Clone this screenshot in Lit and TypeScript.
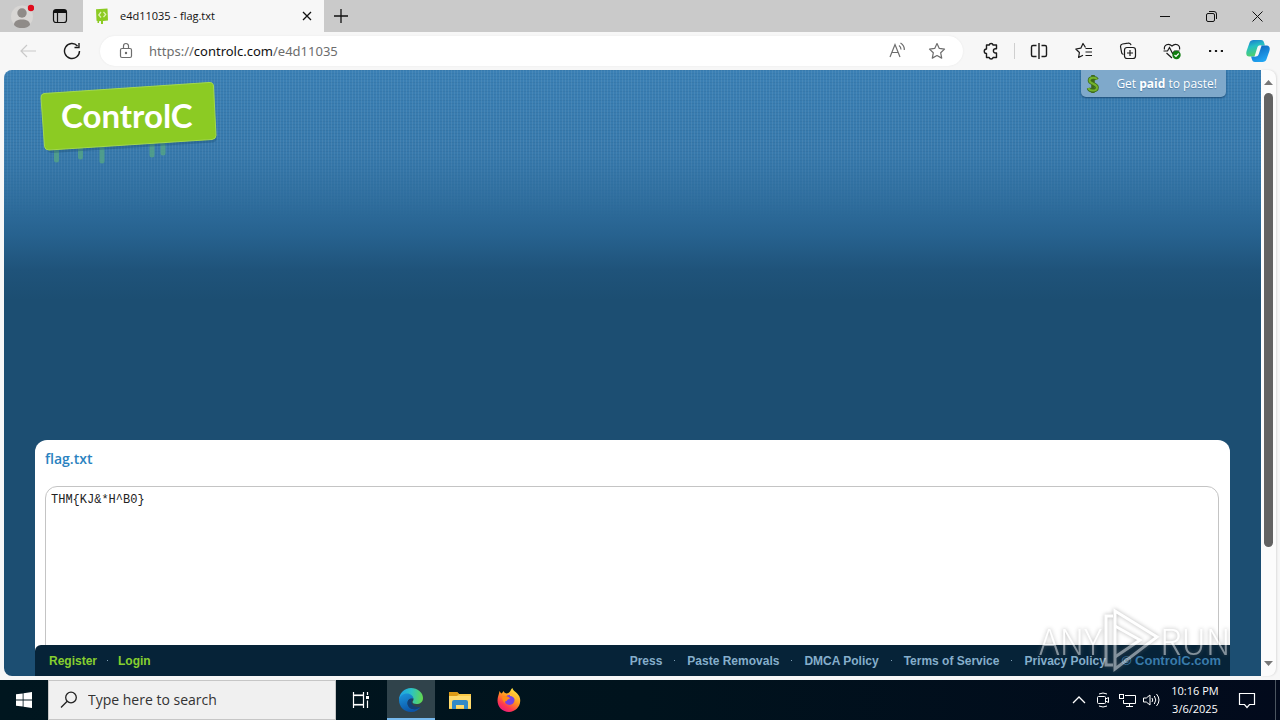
import { LitElement, html, css, svg } from "lit";
import { customElement, state } from "lit/decorators.js";

const FOOTER_LINKS = ["Press", "Paste Removals", "DMCA Policy", "Terms of Service", "Privacy Policy"];

@customElement("browser-tabs")
class BrowserTabs extends LitElement {
  static styles = css`
    :host { display: flex; height: 32px; background: #cacaca; font: 11px/16px "Open Sans", "Noto Sans", sans-serif; color: #111; }
    button { border: 0; background: none; padding: 0; margin: 0; display: grid; place-items: center; color: inherit; }
    svg { display: block; }
    .profile { width: 44px; }
    .panes { width: 32px; }
    .tab { margin-left: 7px; width: 241px; box-sizing: border-box; background: #f7f7f7; display: flex; align-items: center; padding: 0 9px 0 11px; gap: 8px; }
    .title { flex: 1; white-space: nowrap; padding-left: 2px; }
    .close { width: 16px; height: 16px; }
    .add { width: 33px; }
    .space { flex: 1; }
    .win { width: 46px; }
  `;
  render() {
    return html`
      <button class="profile" aria-label="Profile">
        <svg width="24" height="28" viewBox="0 0 24 28"><circle cx="12" cy="14.500" r="11" fill="#d8d6d4"/><circle cx="12" cy="11" r="4.700" fill="#8f8b88"/><path d="M4 23c0-4 3.500-5.500 8-5.500s8 1.500 8 5.500c-2 2.500-5 3-8 3s-6-.5-8-3z" fill="#8f8b88"/><circle cx="21" cy="6" r="3.200" fill="#e00b1c"/></svg>
      </button>
      <button class="panes" aria-label="Tab actions">
        <svg width="16" height="16" viewBox="0 0 16 16" fill="none" stroke="#111"><rect x="1.500" y="1.500" width="13" height="13" rx="2.500" stroke-width="1.200"/><path d="M2 3.500h12" stroke-width="3"/><path d="M5.500 5v9.500" stroke-width="1.200"/></svg>
      </button>
      <div class="tab">
        <svg width="16" height="18" viewBox="0 0 16 18"><path d="M2 2.300 13.500 1.500l.5 12-5 .5V17H7v-3l-2 .2V16H3.500v-2l-1-.2z" fill="#8ccb23"/><path d="M7 5 4.800 8 7 10.500M9.500 4.800 11.700 7.500 9.500 10.200" stroke="#dff0b4" fill="none" stroke-width="1.300"/></svg>
        <span class="title">e4d11035 - flag.txt</span>
        <button class="close" aria-label="Close tab"><svg width="10" height="10" viewBox="0 0 10 10"><path d="m1 1 8 8M9 1 1 9" stroke="#111" stroke-width="1.300"/></svg></button>
      </div>
      <button class="add" aria-label="New tab"><svg width="14" height="14" viewBox="0 0 14 14"><path d="M7 0v14M0 7h14" stroke="#111" stroke-width="1.300"/></svg></button>
      <span class="space"></span>
      <button class="win" aria-label="Minimize"><svg width="10" height="10" viewBox="0 0 10 10"><path d="M0 5.500h10" stroke="#111"/></svg></button>
      <button class="win" aria-label="Restore"><svg width="11" height="11" viewBox="0 0 11 11" fill="none" stroke="#111"><rect x=".5" y="2.500" width="8" height="8" rx="1.500"/><path d="M3 .5h5a2.500 2.500 0 0 1 2.500 2.500v5"/></svg></button>
      <button class="win" aria-label="Close"><svg width="11" height="11" viewBox="0 0 11 11"><path d="m.5.5 10 10M10.500.5l-10 10" stroke="#111"/></svg></button>
    `;
  }
}

@customElement("browser-toolbar")
class BrowserToolbar extends LitElement {
  static styles = css`
    :host { display: flex; height: 38px; background: #f7f7f7; align-items: center; padding-right: 2px; }
    button { border: 0; background: none; padding: 0; margin: 0; display: grid; place-items: center; }
    svg { display: block; fill: none; stroke: #1b1b1b; stroke-width: 1.2; }
    .back { width: 44px; margin-left: 6px; }
    .back svg { stroke: #c9c9c9; }
    .reload { width: 44px; }
    .address { flex: 1; height: 30px; margin: 0 4px 0 6px; border-radius: 15px; background: #fff; display: flex; align-items: center; padding: 0 12px 0 18px; box-shadow: 0 0 2px #e6e6e6; }
    .address svg { stroke: #6d6d6d; }
    .url { flex: 1; margin-left: 15px; font: 13px/20px "Noto Sans", "Open Sans", sans-serif; color: #6d6d6d; }
    .url b { font-weight: 400; color: #111; }
    .inner { width: 28px; margin-left: 12px; }
    .tool { width: 44px; }
    .tool.first { width: 47px; }
    .rule { width: 1px; height: 16px; background: #cfcfcf; }
    .copilot { width: 40px; }
    .copilot svg { stroke: none; }
  `;
  render() {
    return html`
      <button class="back" aria-label="Back"><svg width="18" height="14" viewBox="0 0 18 14"><path d="M17 7H2M8 1 2 7l6 6"/></svg></button>
      <button class="reload" aria-label="Refresh"><svg width="18" height="18" viewBox="0 0 18 18"><path d="M16.500 9A7.500 7.500 0 1 1 14.500 3.900M16 1v4.500h-4.500" stroke-width="1.400"/></svg></button>
      <div class="address">
        <svg width="16" height="18" viewBox="0 0 16 18"><rect x="2.500" y="6.500" width="11" height="9" rx="1.500"/><path d="M5.500 6V4a2.500 2.500 0 0 1 5 0v2"/><circle cx="8" cy="11" r=".6" fill="#6d6d6d"/></svg>
        <span class="url">https://<b>controlc.com</b>/e4d11035</span>
        <button class="inner" aria-label="Read aloud"><svg width="18" height="18" viewBox="0 0 18 18"><path d="m2 15 5-12.500L12 15M3.800 10.500h6.400M11 3.500c1.500 1 2 2.500 2 4M12.500 1c2.500 1.500 4 4 3.800 7"/></svg></button>
        <button class="inner" aria-label="Add to favorites"><svg width="18" height="18" viewBox="0 0 18 18"><path d="m9 1.500 2.300 4.900 5.200.7-3.800 3.700 1 5.300L9 13.500l-4.700 2.600 1-5.300L1.500 7.100l5.200-.7z" stroke-linejoin="round"/></svg></button>
      </div>
      <button class="tool first" aria-label="Extensions"><svg width="18" height="18" viewBox="0 0 18 18"><path d="M4.500 3h2.700a2 2 0 0 1 3.900 0h3.400v3.800h-1a2 2 0 0 0 0 4.200h1v4.500h-3.400a2 2 0 0 1-3.900 0H4.500v-4a2.200 2.200 0 1 1 0-4.500z" stroke-width="1.400" stroke-linejoin="round"/></svg></button>
      <span class="rule"></span>
      <button class="tool first" aria-label="Split screen"><svg width="18" height="18" viewBox="0 0 18 18"><path d="M9 1v16M6.500 3.500H3A1.500 1.500 0 0 0 1.500 5v8A1.500 1.500 0 0 0 3 14.500h3.500M11.500 3.500H15A1.500 1.500 0 0 1 16.500 5v8a1.500 1.500 0 0 1-1.500 1.500h-3.500" stroke-width="1.400"/></svg></button>
      <button class="tool" aria-label="Favorites"><svg width="18" height="18" viewBox="0 0 18 18"><path d="M10.500 5.500 8 1.500 5.800 6.200l-5 .8 3.600 3.500-.8 5L8 13.200M10.500 6.500H17M10.500 10H17M10.500 13.500H17" stroke-linejoin="round"/></svg></button>
      <button class="tool" aria-label="Collections"><svg width="18" height="18" viewBox="0 0 18 18"><path d="M4.500 12.500A2.500 2.500 0 0 1 2.500 10L1.500 4.500a2.500 2.500 0 0 1 2-2.500L9 1.200a2.500 2.500 0 0 1 3 2"/><rect x="5.500" y="5.500" width="11" height="11" rx="2.500"/><path d="M11 8v6M8 11h6"/></svg></button>
      <button class="tool" aria-label="Browser essentials"><svg width="18" height="18" viewBox="0 0 18 18"><path d="M1.500 7.500C.5 3 5.500.5 9 4c3.500-3.500 8.500-1 7.500 3.500M3.500 11 9 16M.5 9h4l2-3.500 3 6L11.500 9h5"/><circle cx="13.500" cy="13" r="4.200" fill="#107c10" stroke="none"/><path d="m11.500 13 1.500 1.500 2.700-3" stroke="#fff"/></svg></button>
      <button class="tool" aria-label="Settings and more"><svg width="18" height="18" viewBox="0 0 18 18"><path d="M2 9h2.200M7.900 9h2.200M13.800 9H16" stroke-width="2.200"/></svg></button>
      <button class="copilot" aria-label="Copilot"><svg width="24" height="24" viewBox="0 0 24 24">
        <defs><linearGradient id="ca" x1="0" y1="0" x2=".3" y2="1"><stop stop-color="#1a71cf"/><stop offset=".45" stop-color="#25bfc4"/><stop offset="1" stop-color="#51d06b"/></linearGradient><linearGradient id="cb" x1="0" y1="0" x2=".5" y2="1"><stop stop-color="#0a5bb5"/><stop offset="1" stop-color="#21a5f2"/></linearGradient></defs>
        <path d="M7.500 1H15c2 0 2.600 1 3.200 3l.7 2.500h-4c-1.800 0-2.500.8-3 2.500l-2 6.500c-.6 1.500-1.500 2-3 2H3.300C.5 17.500-.3 15 .6 12L3.400 4C4.200 1.800 5.500 1 7.500 1z" fill="url(#ca)"/>
        <path d="M16.500 23H9c-2 0-2.600-1-3.200-3L5.100 17.500h3c1.800 0 2.500-.8 3-2.500l2-6.500c.6-1.500 1.500-2 3-2h4.600c2.800 0 3.600 2.500 2.700 5.500L20.600 20c-.8 2.200-2.100 3-4.100 3z" fill="url(#cb)"/>
        <path d="m11.500 8-3 9.500h1.300c1.500 0 2.400-.8 3-2.500l2.800-8.500h-1.300c-1.500 0-2.300.2-2.800 1.500z" fill="#f7f7f7"/>
      </svg></button>
    `;
  }
}

@customElement("paste-page")
class PastePage extends LitElement {
  @state() private text = "THM{KJ&*H^B0}";

  static styles = css`
    :host { position: relative; display: block; overflow: hidden; border-radius: 8px 0 0 8px; background: #1c4e72 linear-gradient(#3b80b5 0, #3779ac 85px, #2f6e9e 130px, #27628f 165px, #1f537a 200px, #1c4e72 230px, #1c4e72 100%) no-repeat; }
    .texture { position: absolute; inset: 0 0 auto; height: 150px; background: repeating-linear-gradient(90deg, #ffffff12 0 1px, transparent 1px 3px), repeating-linear-gradient(#12406718 0 1px, transparent 1px 3px); mask-image: linear-gradient(#000 50%, transparent); }
    header { position: relative; height: 370px; display: flex; justify-content: space-between; align-items: flex-start; padding: 0 35px 0 31px; }
    .logo { display: grid; margin-top: 9px; text-decoration: none; }
    .logo > * { grid-area: 1 / 1; }
    .logo span { font: 700 33px/40px "Lato", "Open Sans", sans-serif; color: #fff; padding: 16px 0 0 26px; }
    .paid { display: flex; align-items: center; box-sizing: border-box; width: 145px; height: 27px; padding: 0 9px 0 5px; justify-content: space-between; border-radius: 0 0 5px 5px; background: #7fa9cb; box-shadow: 0 1px 2px #1d4e78; color: #fff; font: 12px/18px "Open Sans", "Noto Sans", sans-serif; text-decoration: none; text-shadow: 0 1px 1px #4f7fa8; white-space: nowrap; }
    .panel { margin: 0 31px; padding: 10px; border-radius: 12px 12px 0 0; background: #fff; height: 320px; box-sizing: border-box; display: flex; flex-direction: column; gap: 18px; }
    .name { margin: 0; font: 600 14px/18px "Open Sans", "Noto Sans", sans-serif; color: #2a82c0; }
    textarea { flex: 1; box-sizing: border-box; width: auto; margin-right: 1px; padding: 5px; border: 1px solid #c4c4c4; border-radius: 12px; resize: none; outline: 0; font: 12px/16px "Liberation Mono", "DejaVu Sans Mono", monospace; color: #222; background: #fff; }
    footer { position: absolute; inset: auto 31px 0; height: 31px; box-sizing: border-box; padding: 0 9px 0 14px; border-radius: 6px 0 0 0; background: #062338; display: flex; align-items: center; justify-content: space-between; font: 700 12px/16px "Liberation Sans", Arial, sans-serif; }
    nav { display: flex; gap: 12px; align-items: center; }
    nav i { width: 1px; height: 1px; background: #7d9db3; }
    a { color: #85aecb; text-decoration: none; }
    .account a { color: #86cf2f; }
    .account { gap: 10px; }
    .own { margin-left: 4px; font-size: 13px; color: #397bab; }
    .mark { position: absolute; right: 31px; bottom: 2px; width: 191px; height: 68px; display: flex; align-items: center; justify-content: space-between; opacity: .5; filter: drop-shadow(0 0 2px #666); font: 300 35px/60px "Noto Sans CJK SC", "Liberation Sans", sans-serif; color: #fff; pointer-events: none; }
    .mark svg { flex: none; }
  `;

  render() {
    return html`
      <div class="texture"></div>
      <header>
        <a class="logo" href="#">
          <svg width="190" height="90" viewBox="0 0 190 90">
            <g stroke="#4f9c8c" stroke-width="5" stroke-linecap="round"><path d="M21.500 68v13M45.500 66v12M67 64v18M117 60v16M128 60v14"/></g>
            <path d="M10 17.500 174 6q4-.5 4.500 3.500l3 50q0 3.500-4 4L17 74q-4 0-4.500-3.500L7 22q-.5-4 3-4.500z" fill="#1b4c74" opacity=".35"/>
            <path d="M9 14.500 174 3.500q4-.5 4.500 3.500l2.500 49.500q0 3.500-4 4L14 71q-4 0-4.500-3.500L6 19q-.5-4 3-4.500z" fill="#8ccb23" stroke="#a3d94c"/>
          </svg>
          <span>ControlC</span>
        </a>
        <a class="paid" href="#">
          <svg width="14" height="20" viewBox="0 0 14 20" fill="none"><path d="M11 5.500C10 3 3.500 3 3.500 6.500S11 9.500 11 13.500s-7.500 4-8.500.5M7 1v18" stroke="#3c6a1c" stroke-width="3.600"/><path d="M11 5.500C10 3 3.500 3 3.500 6.500S11 9.500 11 13.500s-7.500 4-8.500.5" stroke="#74b32c" stroke-width="2"/></svg>
          <span>Get <b>paid</b> to paste!</span>
        </a>
      </header>
      <main class="panel">
        <h1 class="name">flag.txt</h1>
        <textarea aria-label="Paste text" spellcheck="false" .value=${this.text}></textarea>
      </main>
      <footer>
        <nav class="account"><a href="#">Register</a><i></i><a href="#">Login</a></nav>
        <nav>
          ${FOOTER_LINKS.map((name, i) => html`${i ? html`<i></i>` : ""}<a href="#">${name}</a>`)}
          <span class="own">© ControlC.com</span>
        </nav>
      </footer>
      <div class="mark">
        <span>ANY</span>
        <svg width="58" height="64" viewBox="0 0 58 64" fill="none" stroke="#fff" stroke-width="3"><path d="M11 8H4v49h7M13 3l42 26-42 32z"/><path d="M13 18l25 14-25 17"/></svg>
        <span>RUN</span>
      </div>
    `;
  }
}

@customElement("task-bar")
class TaskBar extends LitElement {
  static styles = css`
    :host { display: flex; height: 40px; background: linear-gradient(90deg, #00161f, #00131d 50%, #020a1c); font: 11px/18px "Open Sans", "Noto Sans", sans-serif; color: #fff; }
    button { border: 0; background: none; padding: 0; margin: 0; display: grid; place-items: center; width: 48px; color: inherit; }
    svg { display: block; }
    .search { box-sizing: border-box; width: 288px; background: #f0f0f0; border: 1px solid #c6c6c6; display: flex; align-items: center; padding: 0 11px; gap: 10px; }
    input { flex: 1; min-width: 0; border: 0; padding: 0; outline: 0; background: none; font: 14px/20px "Open Sans", "Noto Sans", sans-serif; color: #333; }
    input::placeholder { color: #333; opacity: 1; }
    .task { margin-left: 1px; }
    .active { margin-left: 2px; background: #30434b; box-shadow: inset 0 -2px #76b9ed; }
    .app { margin-left: 1px; }
    .space { flex: 1; }
    .tray { width: 24px; }
    .clock { width: 64px; text-align: center; padding-top: 2px; }
    .note { width: 40px; }
    .desk { margin-left: 8px; width: 4px; border-left: 1px solid #4b5560; }
  `;
  render() {
    return html`
      <button aria-label="Start"><svg width="16" height="16" viewBox="0 0 16 16" fill="#fff"><path d="M0 2.300 6.700 1.400v6.200H0zM7.500 1.200 16 0v7.600H7.500zM0 8.400h6.700v6.200L0 13.700zM7.500 8.400H16V16l-8.500-1.200z"/></svg></button>
      <label class="search">
        <svg width="18" height="18" viewBox="0 0 18 18" fill="none" stroke="#222" stroke-width="1.300"><circle cx="11" cy="6.500" r="5.300"/><path d="M7.200 10.300 1 16.500"/></svg>
        <input type="text" aria-label="Search" placeholder="Type here to search" />
      </label>
      <button class="task" aria-label="Task view"><svg width="18" height="18" viewBox="0 0 18 18" fill="none" stroke="#fff" stroke-width="1.200"><path d="M1.500 1v3h10V1M1.500 17v-3h10v3M15.500 1v3M15.500 9.500V17"/><rect x="1.500" y="4.500" width="10" height="9"/><path d="M14 6.500h3" stroke-width="3"/></svg></button>
      <button class="active" aria-label="Microsoft Edge">${this.edge()}</button>
      <button class="app" aria-label="File Explorer"><svg width="22" height="20" viewBox="0 0 22 20"><path d="M0 2h8l2 2h12v15H0z" fill="#f9c846"/><path d="M0 2h8l2 2-2 2H0z" fill="#dd9b16"/><path d="M0 6h22v12H0z" fill="#ffdb6e"/><path d="M3 19v-7q0-2 2-2h12q2 0 2 2v7h-4v-4H7v4z" fill="#348bc7"/></svg></button>
      <button class="app" aria-label="Firefox"><svg width="24" height="24" viewBox="0 0 24 24"><defs><linearGradient id="ff" x1=".8" y1="0" x2=".2" y2="1"><stop stop-color="#fff044"/><stop offset=".45" stop-color="#ff9320"/><stop offset=".75" stop-color="#ff3750"/><stop offset="1" stop-color="#e31587"/></linearGradient></defs><path d="M2.500 3c.5 1.200 1.200 2 2 2.500Q6 4 6.500 3q.7 2 3 2.500C11 5.500 12 4.500 13 3.500 14 2 14 1 15.500 0c0 3 6.500 5 7.500 10.500C24.500 18 18.500 24 12 24S.5 19 .5 12.500C.5 8.500 2 7 2.500 3z" fill="url(#ff)"/><circle cx="12.500" cy="12" r="5" fill="#7543e3"/><path d="M5 9q3-2 6.500 0l2 1.500q-3 .5-4 2.500-2 0-2 2C6 13 5 11 5 9z" fill="#ff8a16"/><path d="M13 6q6 0 6.500 6.500Q16.500 8 13 8z" fill="#ffbd30"/></svg></button>
      <span class="space"></span>
      <button class="tray" aria-label="Show hidden icons"><svg width="14" height="8" viewBox="0 0 14 8" fill="none" stroke="#fff" stroke-width="1.300"><path d="m1 7 6-6 6 6"/></svg></button>
      <button class="tray" aria-label="Meet now"><svg width="14" height="16" viewBox="0 0 14 16" fill="none" stroke="#fff"><rect x="1.500" y="4.500" width="8" height="7" rx="1"/><path d="m9.500 7 3-1.500v5L9.500 9M3 2q4-2 8 0M3 14q4 2 8 0"/></svg></button>
      <button class="tray" aria-label="Network"><svg width="17" height="15" viewBox="0 0 17 15" fill="none" stroke="#fff"><path d="M6 2.500h10.500v8H4.500V7M10.500 10.500v3M7 13.500h7"/><rect x=".5" y="1.500" width="4" height="4"/></svg></button>
      <button class="tray" aria-label="Volume"><svg width="17" height="14" viewBox="0 0 17 14" fill="none" stroke="#fff"><path d="M.5 5v4h2.800L7 12V2L3.300 5zM9 5q1.500 2 0 4M11.300 3q3 4 0 8M13.500 1q5 6 0 12"/></svg></button>
      <time class="clock">10:16 PM<br />3/6/2025</time>
      <button class="note" aria-label="Notifications"><svg width="18" height="17" viewBox="0 0 18 17" fill="none" stroke="#fff" stroke-width="1.200"><path d="M1.500 1.500h15v11h-5L9 15.500l-2.500-3h-5z"/></svg></button>
      <span class="desk"></span>
    `;
  }
  private edge() {
    return svg`<svg width="26" height="26" viewBox="0 0 26 26">
      <defs><linearGradient id="ea" x1="0" y1=".4" x2="1" y2=".5"><stop stop-color="#1c9fe8"/><stop offset=".5" stop-color="#2cc2c4"/><stop offset="1" stop-color="#62d84e"/></linearGradient><linearGradient id="eb" x1="0" y1="0" x2=".4" y2="1"><stop stop-color="#1c96dc"/><stop offset="1" stop-color="#0b55a8"/></linearGradient></defs>
      <path d="M1 13C1 6 6.500 1 13 1s12 4.500 12 10c0 4-3 6-6.500 6-2.500 0-4-.8-4-2 0-.7 1-1 1-2.700C15.500 10 13 8 9.500 8 5 8 2 10.500 1 13z" fill="url(#ea)"/>
      <path d="M1 13c.5-4 4-6.500 8-6.500 3.500 0 6.500 2.500 6.500 5.500-3-1.500-6 .5-6 4 0 4 4 7 8.500 6 2-.5 3.500-1.200 5-2.500C21 23 17.500 25 13 25 6 25 1 19.500 1 13z" fill="url(#eb)"/>
      <path d="M9.500 16c0 4 4 7 8.500 6 2-.5 3.500-1.200 5-2.500-2 1-8 1-9.500-3.500-.5-1.600.2-3 1.500-4-3-1-5.500 1-5.500 4z" fill="#123f77"/>
    </svg>`;
  }
}

@customElement("app-root")
class AppRoot extends LitElement {
  static styles = css`
    :host { display: flex; flex-direction: column; height: 100vh; min-height: 480px; overflow: hidden; background: #f7f7f7; }
    .view { flex: 1; min-height: 0; display: flex; padding: 0 4px 4px; }
    paste-page { flex: 1; }
    .bar { width: 15px; box-sizing: border-box; border-radius: 0 8px 8px 0; background: #fcfcfc; box-shadow: 1px 0 2px #ddd; display: flex; flex-direction: column; align-items: center; padding: 10px 0 10px; }
    .arrow { flex: none; display: block; }
    .track { flex: 1; align-self: stretch; padding: 8px 3px 7px; }
    .thumb { height: 81%; border-radius: 5px; background: #636363; width: 9px; }
  `;
  render() {
    return html`
      <browser-tabs></browser-tabs>
      <browser-toolbar></browser-toolbar>
      <div class="view">
        <paste-page></paste-page>
        <div class="bar">
          <svg class="arrow" width="9" height="5" viewBox="0 0 9 5"><path d="M0 5 4.500 0 9 5z" fill="#777"/></svg>
          <div class="track"><div class="thumb"></div></div>
          <svg class="arrow" width="9" height="5" viewBox="0 0 9 5"><path d="M0 0h9L4.500 5z" fill="#777"/></svg>
        </div>
      </div>
      <task-bar></task-bar>
    `;
  }
}
